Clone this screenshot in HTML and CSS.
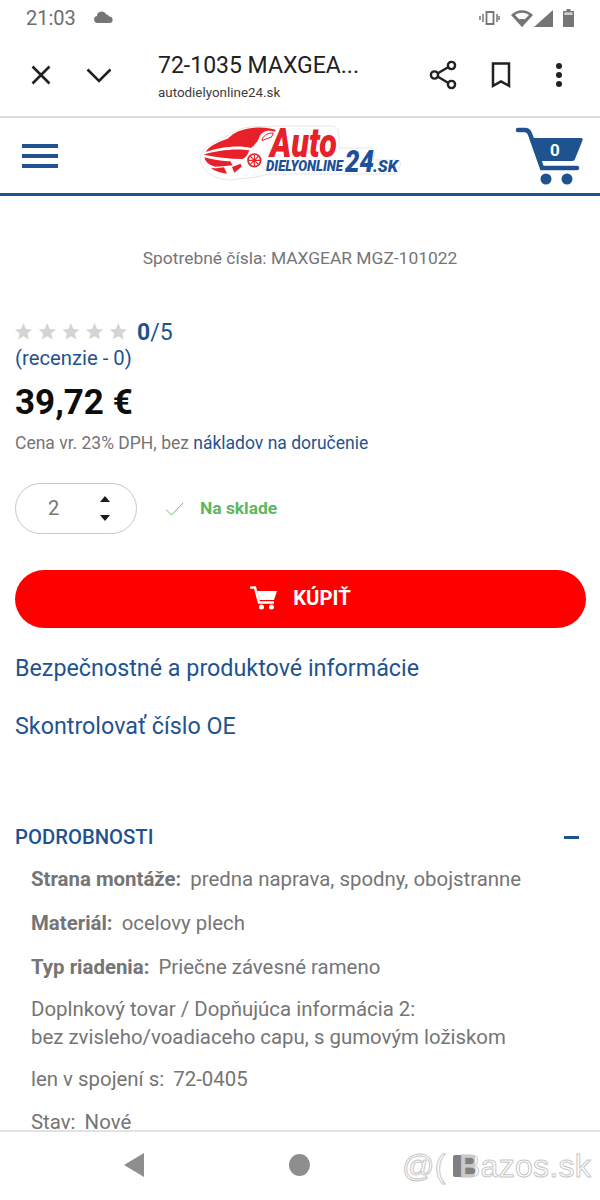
FILE: index.html
```html
<!DOCTYPE html>
<html lang="sk">
<head>
    <meta charset="UTF-8">
    <meta name="viewport" content="width=device-width, initial-scale=1.0">
    <title>72-1035 MAXGEAR</title>
    <link rel="stylesheet" href="styles.css">
</head>
<body>
    <div class="phone">
        <div class="status-bar">
            <span class="clock">21:03</span>
            <svg class="cloud" width="21" height="12" viewBox="0 0 20 12"><path d="M4 12a3.600 3.600 0 0 1-.6-7.100A5 5 0 0 1 8 .5c2.300 0 3.900 1.200 4.600 3.100a2.800 2.800 0 0 1 3 1.800A3.300 3.300 0 0 1 16 12z" fill="#757575"/></svg>
            <div class="status-icons">
                <svg width="21" height="14" viewBox="0 0 21 14"><path d="M7.500 1h7v12h-7z" fill="none" stroke="#757575" stroke-width="1.800"/><path d="M4 3v8M1 5v4M18 3v8M20 5v4" stroke="#757575" stroke-width="1.500"/></svg>
                <svg class="wifi" width="22" height="17" viewBox="0 0 22 17"><path d="M11 17 0 5C6-1.500 16-1.500 22 5z" fill="#757575"/><path d="M11 12 4 5C8 2 14 2 18 5z" fill="#fff"/><path d="M11 17 5.800 10.500c3-2 7.400-2 10.400 0z" fill="#757575"/></svg>
                <svg class="signal" width="19" height="17" viewBox="0 0 19 17"><path d="M19 0v17H0z" fill="#757575"/></svg>
                <svg class="battery" width="11" height="18" viewBox="0 0 11 18"><path d="M3.500 0h4v2H11v16H0V2h3.500z" fill="#757575"/><path d="M1.300 3.300h8.400v2.700H1.300z" fill="#cfcfcf"/></svg>
            </div>
        </div>

        <div class="toolbar">
            <svg class="tool-close" width="22" height="22" viewBox="0 0 22 22"><path d="M2.500 2.500l17 17M19.500 2.500l-17 17" stroke="#212121" stroke-width="2.600" fill="none"/></svg>
            <svg class="tool-down" width="26" height="16" viewBox="0 0 26 16"><path d="M1.500 2.500 13 14 24.500 2.500" stroke="#212121" stroke-width="2.600" fill="none"/></svg>
            <div class="tool-title">
                <div class="page-title">72-1035 MAXGEA...</div>
                <div class="page-url">autodielyonline24.sk</div>
            </div>
            <svg class="tool-share" width="28" height="30" viewBox="0 0 28 30"><path d="M22 5.500 6 15l16 9.500" stroke="#212121" stroke-width="2.400" fill="none"/><circle cx="22.500" cy="5.500" r="3.600" fill="#fff" stroke="#212121" stroke-width="2.400"/><circle cx="5.500" cy="15" r="3.600" fill="#fff" stroke="#212121" stroke-width="2.400"/><circle cx="22.500" cy="24.500" r="3.600" fill="#fff" stroke="#212121" stroke-width="2.400"/></svg>
            <svg class="tool-bookmark" width="20" height="26" viewBox="0 0 20 26"><path d="M2 1.500h16v22.300l-8-4.300-8 4.300z" stroke="#212121" stroke-width="2.500" fill="none"/></svg>
            <svg class="tool-more" width="8" height="26" viewBox="0 0 8 26"><circle cx="4" cy="4" r="3" fill="#212121"/><circle cx="4" cy="13" r="3" fill="#212121"/><circle cx="4" cy="22" r="3" fill="#212121"/></svg>
        </div>

        <header class="site-header">
            <div class="burger"><span></span><span></span><span></span></div>
            <svg class="logo" width="204" height="58" viewBox="0 0 204 58">
                <path d="M2 34C4 23 20 16 29 12 39 4 54 1 70 3L76 2H134C139 2 141 6 141 12V24H172C176 24 177 27 176 30L175 36H198C202 36 203 39 202 42L200 47C199 49 198 50 196 50H70C60 54 45 54 34 56 18 56 3 48 2 34Z" fill="#fff" stroke="#e6e6e6"/>
                <g transform="translate(-2 -2) scale(.3333)" fill="#e8202a">
                    <path d="M30 90C35 75 60 62 95 50 115 30 140 20 175 17 200 15 225 18 240 24L236 29C212 22 196 30 190 45 185 60 175 70 165 78 130 68 70 75 30 90Z"/>
                    <path d="M198 56C200 42 214 32 232 33L226 46C216 48 208 52 198 56Z" fill="#fff" stroke="#e8202a" stroke-width="3"/>
                    <path d="M23 98C60 85 120 78 160 85 156 97 150 107 140 111 100 110 60 106 23 98Z"/>
                    <path d="M25 106C55 114 85 118 103 118L110 130C90 132 70 134 58 134 40 130 28 120 25 106Z"/>
                    <path d="M45 137C60 140 72 138 84 136L93 155C72 152 55 147 45 137Z"/>
                    <path d="M108 135 134 125 137 134 115 152Z"/>
                    <circle cx="175" cy="115" r="19" fill="#fff" stroke="#e8202a" stroke-width="5"/>
                    <path d="M175 98v34M158 115h34M163 103l24 24M187 103l-24 24" stroke="#e8202a" stroke-width="3.500"/>
                </g>
                <text class="logo-auto" x="72" y="33" textLength="67" lengthAdjust="spacingAndGlyphs">Auto</text>
                <text class="logo-blue logo-diely" x="68" y="47" textLength="77" lengthAdjust="spacingAndGlyphs">DIELYONLINE</text>
                <text class="logo-blue logo-24" x="147" y="48" textLength="29" lengthAdjust="spacingAndGlyphs">24</text>
                <text class="logo-blue logo-sk" x="175" y="48" textLength="25" lengthAdjust="spacingAndGlyphs">.SK</text>
            </svg>
            <div class="cart">
                <svg width="68" height="58" viewBox="0 0 68 58"><path d="M3 3h7c3 0 4 1.500 5 4l12 34h35" stroke="#1f5390" stroke-width="4.500" fill="none" stroke-linecap="round"/><path d="M16 11h50c1.500 0 2 1 1.500 2.500L60 32c-.5 1.500-1.500 2-3 2H23z" fill="#1f5390"/><circle cx="31" cy="52" r="5.500" fill="#1f5390"/><circle cx="52" cy="52" r="5.500" fill="#1f5390"/></svg>
                <span class="cart-count">0</span>
            </div>
        </header>

        <main class="content">
            <p class="consumable">Spotrebné čísla: MAXGEAR MGZ-101022</p>

            <div class="rating">
                <svg class="stars" width="122" height="17" viewBox="0 0 122 17">
                    <polygon id="star" points="8.500,0 11,5.900 17,6.400 12.500,10.400 13.900,16.500 8.500,13.200 3.100,16.500 4.500,10.400 0,6.400 6,5.900" fill="#d4d4d4"/>
                    <use href="#star" x="23.700"/>
                    <use href="#star" x="47.400"/>
                    <use href="#star" x="71.100"/>
                    <use href="#star" x="94.800"/>
                </svg>
                <span class="score"><b>0</b>/5</span>
            </div>
            <a class="reviews">(recenzie - 0)</a>
            <div class="price">39,72 €</div>
            <p class="price-note">Cena vr. 23% DPH, bez <a>nákladov na doručenie</a></p>

            <div class="stock-row">
                <div class="qty">
                    <span class="qty-value">2</span>
                    <span class="qty-arrows"><i class="arrow-up"></i><i class="arrow-down"></i></span>
                </div>
                <svg class="check" width="19" height="14" viewBox="0 0 19 14"><path d="M1 7.500 6.500 13 18 1" stroke="#6dbf6d" stroke-width="1" fill="none"/></svg>
                <span class="in-stock">Na sklade</span>
            </div>

            <button class="buy-btn">
                <svg width="28" height="24" viewBox="0 0 28 24"><path d="M1 1.500h4l4 15h14" stroke="#fff" stroke-width="2.400" fill="none" stroke-linecap="round"/><path d="M7 5h20l-3 9H9.500z" fill="#fff"/><circle cx="11.500" cy="21" r="2.500" fill="#fff"/><circle cx="21.500" cy="21" r="2.500" fill="#fff"/></svg>
                <span>KÚPIŤ</span>
            </button>

            <a class="big-link first">Bezpečnostné a produktové informácie</a>
            <a class="big-link">Skontrolovať číslo OE</a>

            <div class="details-head">
                <span>PODROBNOSTI</span>
                <i class="minus"></i>
            </div>
            <div class="details">
                <p><b>Strana montáže:</b> predna naprava, spodny, obojstranne</p>
                <p><b>Materiál:</b> ocelovy plech</p>
                <p><b>Typ riadenia:</b> Priečne závesné rameno</p>
                <p class="two-lines">Doplnkový tovar / Dopňujúca informácia 2:<br>bez zvisleho/voadiaceho capu, s gumovým ložiskom</p>
                <p class="tight"><span class="label">len v spojení s:</span> 72-0405</p>
                <p><span class="label">Stav:</span> Nové</p>
            </div>
        </main>

        <nav class="nav-bar">
            <i class="nav-back"></i>
            <i class="nav-home"></i>
            <i class="nav-recent"></i>
            <span class="watermark">@( Bazos.sk</span>
        </nav>
    </div>
</body>
</html>
```

FILE: styles.css
```css
* {
    box-sizing: border-box;
}

body {
    margin: 0;
    background: #fff;
    font-family: 'Roboto', sans-serif;
    color: #757575;
}

.phone {
    width: 600px;
    height: 1200px;
    display: flex;
    flex-direction: column;
    overflow: hidden;
}

/* status bar */
.status-bar {
    height: 36px;
    flex: none;
    display: flex;
    align-items: center;
    padding: 0 26px 0 26px;
}

.clock {
    font-size: 20px;
    color: #6e6e6e;
}

.cloud {
    margin-left: 17px;
    margin-top: -3px;
}

.status-icons {
    margin-left: auto;
    display: flex;
    align-items: center;
}

.wifi {
    margin-left: 11px;
}

.signal {
    margin-left: 1px;
}

.battery {
    margin-left: 10px;
}

/* browser toolbar */
.toolbar {
    height: 82px;
    flex: none;
    display: flex;
    align-items: center;
    border-bottom: 2px solid #dcdcdc;
    padding-bottom: 2px;
}

.tool-close {
    margin-left: 30px;
}

.tool-down {
    margin-left: 34px;
}

.tool-title {
    width: 260px;
    margin-left: 46px;
    margin-top: 4px;
}

.page-title {
    font-size: 23px;
    line-height: 30px;
    margin-bottom: 1px;
    color: #212121;
}

.page-url {
    font-size: 13.400px;
    line-height: 22px;
    color: #3c3c3c;
}

.tool-share {
    margin-left: 11px;
}

.tool-bookmark {
    margin-left: 34px;
}

.tool-more {
    margin-left: 44px;
}

/* site header */
.site-header {
    height: 78px;
    flex: none;
    display: flex;
    align-items: center;
    border-bottom: 3px solid #1f5390;
}

.burger {
    margin-left: 22px;
    width: 36px;
    display: flex;
    flex-direction: column;
    gap: 6px;
}

.burger span {
    height: 4px;
    background: #1f5390;
}

.logo {
    margin-left: 140px;
    margin-top: -5px;
    overflow: visible;
}

.logo text {
    font-family: 'Roboto', sans-serif;
    font-style: italic;
    font-weight: 900;
}

.logo-auto {
    font-size: 41px;
    fill: #e8202a;
}

.logo-blue {
    fill: #1d4f9c;
}

.logo-diely {
    font-size: 15.500px;
}

.logo-24 {
    font-size: 31px;
}

.logo-sk {
    font-size: 16px;
}

.cart {
    margin-left: auto;
    margin-right: 17px;
    position: relative;
    height: 58px;
}

.cart-count {
    position: absolute;
    left: 35px;
    top: 13px;
    font-size: 17px;
    font-weight: 700;
    color: #fff;
}

/* content */
.content {
    flex: 1;
    min-height: 0;
    overflow: hidden;
    padding: 0 15px;
}

.content p {
    margin: 0;
}

.consumable {
    margin-top: 52px !important;
    text-align: center;
    font-size: 17.400px;
    line-height: 20px;
}

.rating {
    margin-top: 51px;
    height: 26px;
    display: flex;
    align-items: center;
}

.stars {
    flex: none;
    margin-top: -2px;
}

.score {
    font-size: 23px;
    color: #1f5390;
}

.reviews {
    display: block;
    font-size: 20.300px;
    line-height: 26px;
    color: #1f5390;
}

.price {
    margin-top: 10px;
    font-size: 35px;
    line-height: 44px;
    font-weight: 700;
    color: #0d0d0d;
}

.price-note {
    margin-top: 7px !important;
    font-size: 17.500px;
    line-height: 22px;
}

.price-note a {
    color: #1f5390;
}

.stock-row {
    margin-top: 29px;
    display: flex;
    align-items: center;
}

.qty {
    width: 122px;
    height: 51px;
    border: 1px solid #c8c8c8;
    border-radius: 26px;
    display: flex;
    align-items: center;
}

.qty-value {
    margin-left: 32px;
    margin-top: -2px;
    font-size: 20px;
    color: #757575;
}

.qty-arrows {
    margin-left: 41px;
    display: flex;
    flex-direction: column;
    gap: 13px;
}

.arrow-up,
.arrow-down {
    display: block;
    width: 0;
    height: 0;
    border-left: 5.500px solid transparent;
    border-right: 5.500px solid transparent;
}

.arrow-up {
    border-bottom: 6px solid #1a1a1a;
}

.arrow-down {
    border-top: 6px solid #1a1a1a;
}

.check {
    margin-left: 28px;
}

.in-stock {
    margin-left: 16px;
    margin-top: -2px;
    font-size: 17.400px;
    font-weight: 700;
    color: #5cb85c;
}

.buy-btn {
    margin-top: 36px;
    width: 571px;
    height: 58px;
    border: none;
    border-radius: 29px;
    background: #fe0000;
    color: #fff;
    font-family: inherit;
    font-size: 20.300px;
    font-weight: 700;
    display: flex;
    align-items: center;
    justify-content: center;
    gap: 15px;
    padding: 0 0 3px;
}

.big-link {
    display: block;
    font-size: 23.300px;
    line-height: 30px;
    color: #1f5390;
    margin-top: 28px;
}

.big-link.first {
    margin-top: 25px;
}

.details-head {
    margin-top: 84px;
    display: flex;
    align-items: center;
    justify-content: space-between;
    font-size: 20.300px;
    line-height: 24px;
    font-weight: 500;
    color: #1f5390;
}

.minus {
    width: 15px;
    height: 3px;
    background: #1f5390;
    margin-right: 6px;
}

.details {
    padding-left: 16px;
    margin-top: 17px;
    font-size: 20.400px;
    line-height: 26px;
}

.details p {
    margin-bottom: 18px;
}

.details b,
.details .label {
    margin-right: 4px;
}

.details .two-lines {
    margin-top: -3px;
    margin-bottom: 15px;
    line-height: 28px;
}

.details .tight {
    margin-bottom: 17px;
}

/* android nav bar */
.nav-bar {
    height: 70px;
    flex: none;
    border-top: 2px solid #e2e2e2;
    position: relative;
    background: #fff;
}

.nav-back {
    position: absolute;
    left: 124px;
    top: 21px;
    width: 0;
    height: 0;
    border-top: 12px solid transparent;
    border-bottom: 12px solid transparent;
    border-right: 20px solid #8e8e8e;
}

.nav-home {
    position: absolute;
    left: 289px;
    top: 22px;
    width: 21px;
    height: 22px;
    border-radius: 50%;
    background: #8e8e8e;
}

.nav-recent {
    position: absolute;
    left: 453px;
    top: 23px;
    width: 22px;
    height: 22px;
    border-radius: 2px;
    background: #808080;
}

.watermark {
    position: absolute;
    left: 402px;
    top: 14px;
    font-size: 32px;
    line-height: 40px;
    word-spacing: 4px;
    letter-spacing: 0.3px;
    font-family: 'Liberation Sans', sans-serif;
    color: rgba(255, 255, 255, 0.6);
    -webkit-text-stroke: 1px #c8c8c8;
    white-space: nowrap;
}
```
